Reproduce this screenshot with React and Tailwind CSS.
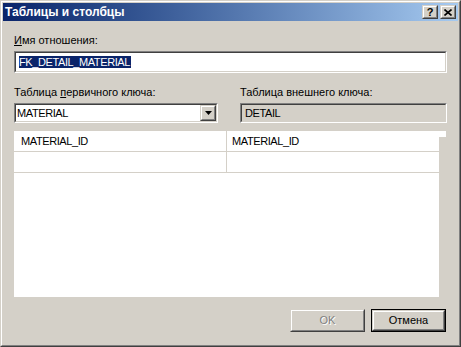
const FONT = { fontFamily: '"Liberation Sans", Arial, sans-serif' };

// classic sunken edit field frame
function Sunken({ className = "", inner = "", children }) {
  return (
    <div className={`border border-t-[#808080] border-l-[#808080] border-r-white border-b-white ${className}`}>
      <div className={`h-full border border-t-[#404040] border-l-[#404040] border-r-[#d4d0c8] border-b-[#d4d0c8] ${inner}`}>
        {children}
      </div>
    </div>
  );
}

// classic raised button frame
function Raised({ className = "", children }) {
  return (
    <div className={`border border-t-[#d4d0c8] border-l-[#d4d0c8] border-r-[#404040] border-b-[#404040] bg-[#d4d0c8] ${className}`}>
      <div className="h-full flex items-center justify-center border border-t-white border-l-white border-r-[#808080] border-b-[#808080]">
        {children}
      </div>
    </div>
  );
}

function CaptionButtons() {
  return (
    <div className="flex gap-[2px] mr-[2px]">
      <Raised className="w-[16px] h-[14px]">
        <span className="text-[11px] font-bold leading-none text-black">?</span>
      </Raised>
      <Raised className="w-[16px] h-[14px]">
        <svg width="8" height="7" viewBox="0 0 8 7">
          <path d="M0.5 0.5 L7.5 6.5 M7.5 0.5 L0.5 6.5" stroke="#000" strokeWidth="1.6" />
        </svg>
      </Raised>
    </div>
  );
}

export default function App() {
  return (
    <div className="w-[461px] h-[347px] text-[11px] leading-[13px] text-black" style={FONT}>
      <div className="w-full h-full border border-t-[#d4d0c8] border-l-[#d4d0c8] border-r-[#404040] border-b-[#404040]">
        <div className="w-full h-full border border-t-white border-l-white border-r-[#808080] border-b-[#808080] bg-[#d4d0c8] p-px flex flex-col">
          {/* title bar */}
          <div className="h-[18px] flex items-center justify-between bg-linear-to-r from-[#0a246a] to-[#a6caf0]">
            <span className="pl-[2px] text-white font-bold text-[12px]">Таблицы и столбцы</span>
            <CaptionButtons />
          </div>

          <div className="flex flex-col px-[11px]">
            <div className="mt-[13px]">
              <span className="underline">И</span>мя отношения:
            </div>
            <Sunken className="mt-[4px] h-[22px]" inner="bg-white flex items-center pl-[3px]">
              <span className="bg-[#0a246a] text-white leading-[12px] pr-px tracking-[-0.4px]">FK_DETAIL_MATERIAL</span>
            </Sunken>

            <div className="mt-[13px] flex gap-[22px]">
              <div className="w-[204px] flex flex-col">
                <div>
                  Таблица <span className="underline">п</span>ервичного ключа:
                </div>
                <Sunken className="mt-[4px] h-[20px]" inner="bg-white flex items-center justify-between">
                  <span className="pl-px tracking-[-0.4px]">MATERIAL</span>
                  <Raised className="w-[16px] h-[16px]">
                    <svg width="7" height="4" viewBox="0 0 7 4">
                      <path d="M0 0 H7 L3.5 4 Z" fill="#000" />
                    </svg>
                  </Raised>
                </Sunken>
              </div>
              <div className="flex-1 flex flex-col">
                <div>Таблица внешнего ключа:</div>
                <Sunken className="mt-[4px] h-[20px]" inner="bg-[#d4d0c8] flex items-center pl-[3px]">
                  <span className="tracking-[-0.4px]">DETAIL</span>
                </Sunken>
              </div>
            </div>

            {/* column mapping grid */}
            <div className="mt-[8px] flex">
              <div className="w-[425px] h-[166px] bg-white">
                {[0, 1].map((r) => (
                  <div key={r} className="flex h-[21px] border-b border-[#d4d0c8] tracking-[-0.4px]">
                    <div className="w-[213px] border-r border-[#d4d0c8] pl-[7px] flex items-center">
                      {r === 0 ? "MATERIAL_ID" : ""}
                    </div>
                    <div className="flex-1 pl-[5px] flex items-center">{r === 0 ? "MATERIAL_ID" : ""}</div>
                  </div>
                ))}
              </div>
              <div className="w-[7px] h-[6px] bg-white" />
            </div>

            <div className="mt-[12px] flex justify-end gap-[6px] pr-px">
              <Raised className="w-[75px] h-[23px]">
                <span className="text-[#808080] [text-shadow:1px_1px_0_#fff]">OK</span>
              </Raised>
              <div className="w-[75px] h-[23px] border border-black">
                <Raised className="w-full h-full">
                  <span>Отмена</span>
                </Raised>
              </div>
            </div>
          </div>
        </div>
      </div>
    </div>
  );
}
